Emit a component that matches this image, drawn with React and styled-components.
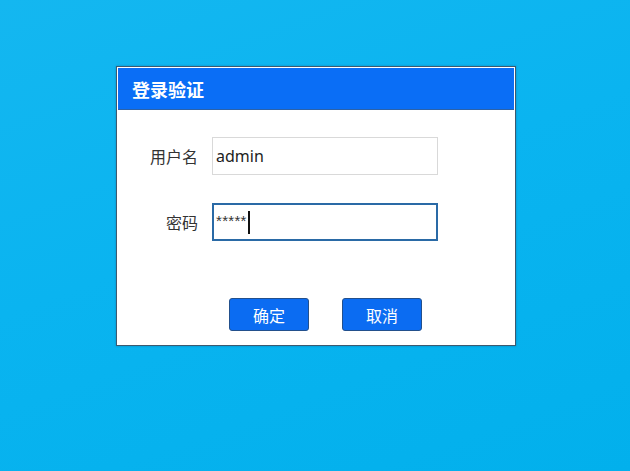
import React from "react";
import styled, { createGlobalStyle } from "styled-components";

const Global = createGlobalStyle`
  html, body {
    margin: 0;
    padding: 0;
  }
  body {
    font-family: "Noto Sans CJK SC", "Noto Sans", sans-serif;
  }
`;

const Desktop = styled.div`
  width: 630px;
  height: 471px;
  box-sizing: border-box;
  padding: 66px 0 0 116px;
  background: linear-gradient(160deg, #14b7f0 0%, #0ab4f0 45%, #02b0ec 100%);
  overflow: hidden;
`;

const Dialog = styled.div`
  width: 400px;
  box-sizing: border-box;
  border: 1px solid #3c5a70;
  padding: 1px;
  background: #fff;
  box-shadow: 0 0 2px rgba(0, 40, 80, 0.3);
`;

const TitleBar = styled.div`
  height: 41px;
  display: flex;
  align-items: center;
  padding-left: 14px;
  background: #0a6ef6;
  border-bottom: 1px solid #2c62a8;
  color: #fff;
  font-size: 18px;
  font-weight: 700;
`;

const Form = styled.div`
  display: grid;
  grid-template-columns: 80px 226px;
  column-gap: 14px;
  row-gap: 28px;
  padding-top: 27px;
  align-items: center;
`;

const Label = styled.div`
  text-align: right;
  font-size: 16px;
  color: #333;
`;

const Field = styled.div`
  height: 38px;
  box-sizing: border-box;
  display: flex;
  align-items: center;
  border: ${p => (p.focused ? "2px solid #2a6aa6" : "1px solid #d9d9d9")};
  padding-left: ${p => (p.focused ? "2px" : "3px")};
  background: #fff;
  font-family: "Noto Sans", "Noto Sans CJK SC", sans-serif;
  font-size: 16px;
  color: #222;
`;

const Stars = styled.span`
  font-family: "Liberation Sans", sans-serif;
  font-size: 15px;
  letter-spacing: 0.3px;
  color: #333;
  margin-top: -4px;
`;

const Caret = styled.span`
  display: inline-block;
  width: 2px;
  height: 23px;
  background: #111;
  margin-left: 1px;
`;

const Buttons = styled.div`
  display: flex;
  gap: 33px;
  padding: 57px 0 13px 111px;
`;

const Button = styled.button`
  width: 80px;
  height: 33px;
  border: 1px solid #23508c;
  border-radius: 3px;
  background: #0b6cf2;
  color: #fff;
  font-family: "Noto Sans CJK SC", sans-serif;
  font-size: 16px;
  padding: 0;
  cursor: pointer;
`;

const App = () => {
  return (
    <Desktop>
      <Global />
      <Dialog>
        <TitleBar>登录验证</TitleBar>
        <Form>
          <Label>用户名</Label>
          <Field>admin</Field>
          <Label>密码</Label>
          <Field focused>
            <Stars>*****</Stars>
            <Caret />
          </Field>
        </Form>
        <Buttons>
          <Button>确定</Button>
          <Button>取消</Button>
        </Buttons>
      </Dialog>
    </Desktop>
  );
};

export default App;
